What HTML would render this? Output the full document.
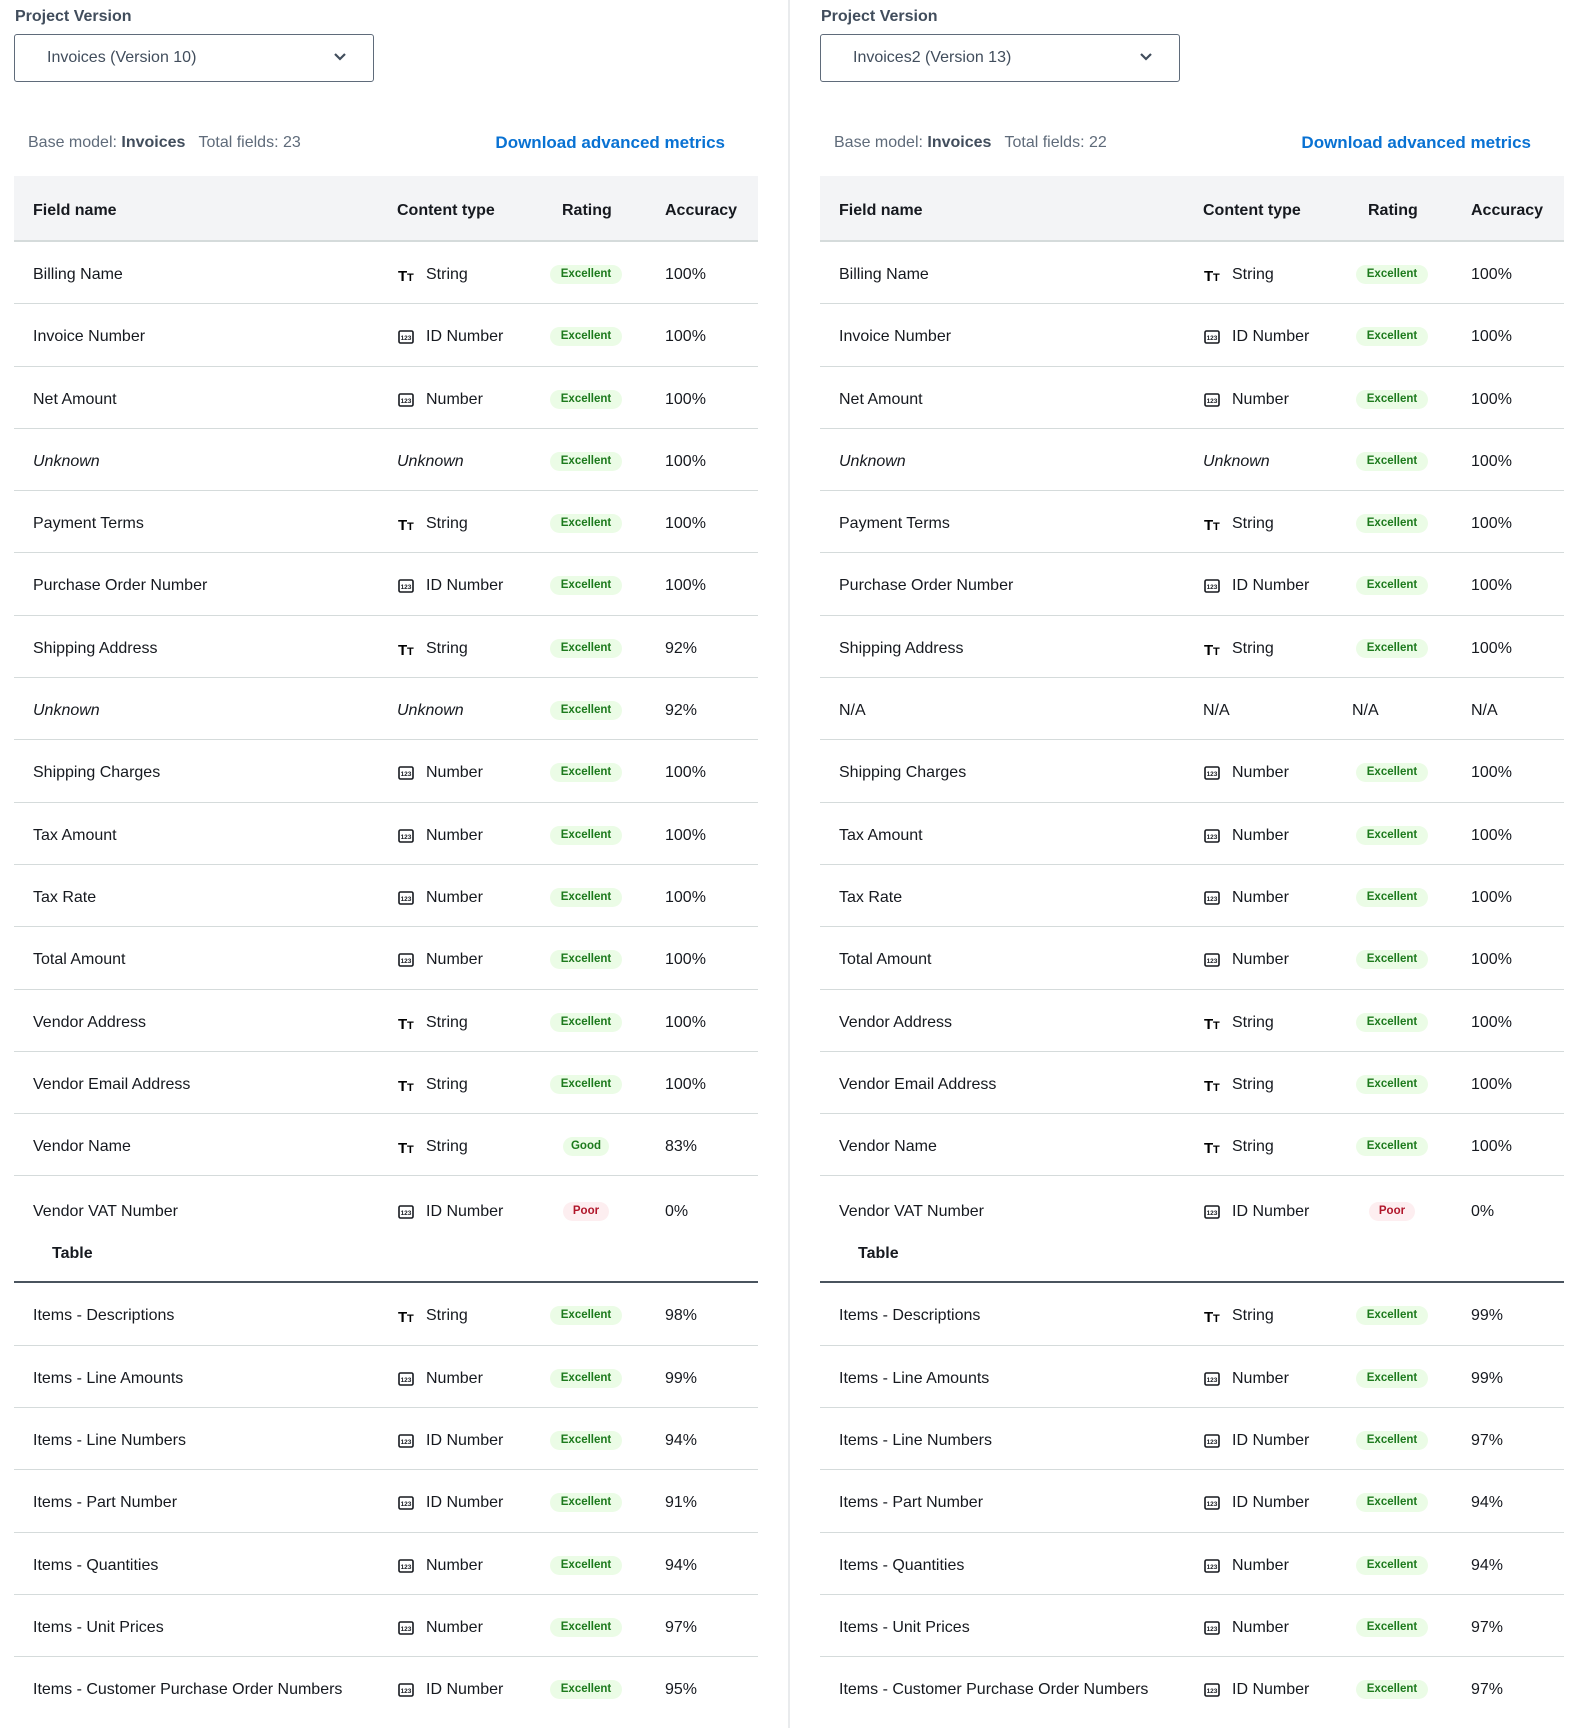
<!DOCTYPE html>
<html><head><meta charset="utf-8"><style>
*{margin:0;padding:0;box-sizing:border-box}
body{width:1583px;height:1728px;background:#fff;font-family:"Liberation Sans",Arial,sans-serif;color:#16191f;position:relative;overflow:hidden}
.panel{position:absolute;top:0;width:744px}
.pv{position:absolute;top:8px;left:1px;font-size:16px;font-weight:bold;color:#414d5c}
.dd{position:absolute;top:34px;left:0;width:360px;height:48px;border:1px solid #5f6b7a;border-radius:3px;font-size:16px;color:#414d5c;padding:14px 0 0 32px}
.dd svg{position:absolute;right:26px;top:17px}
.bm{position:absolute;top:134px;left:14px;font-size:16px;color:#5f6b7a}
.bm b{color:#414d5c}
.dl{position:absolute;top:133px;right:33px;font-size:17px;font-weight:bold;color:#0972d3}
.tbl{position:absolute;top:176px;left:0;width:744px}
.hd{height:66px;background:#f3f4f6;border-bottom:2px solid #d5dbdb;position:relative;font-weight:bold;font-size:16px}
.hd span{position:absolute;top:26px}
.r{height:62.3px;border-bottom:1px solid #d5dbdb;position:relative;font-size:16px}
.r>*{position:absolute;top:24px}
.n{left:19px}
.ic{left:384px;top:26px!important}
.t{left:412px}
.a{left:651px}
.b{left:536px;width:72px;height:19px;top:23px!important;border-radius:10px;font-size:11.5px;font-weight:bold;text-align:center;line-height:19px}
.e{background:#ebfce6;color:#1d7a1d}
.g{background:#ebfce6;color:#1d7a1d;left:549px;width:46px}
.p{background:#fdeef0;color:#b0162a;left:549px;width:46px}
i{font-style:italic}
.big{height:107px;border-bottom:2px solid #4a545e}
.tl{left:38px;top:69px!important;font-weight:bold}
</style></head><body>

<svg width="0" height="0" style="position:absolute"><defs>
<symbol id="num" viewBox="0 0 16 14"><rect x="1" y="1" width="14" height="12" rx="1.5" fill="none" stroke="#16191f" stroke-width="1.6"/><text x="8" y="10" font-size="6.5" font-weight="bold" text-anchor="middle" font-family="Liberation Sans" fill="#16191f">123</text></symbol>
<symbol id="tt" viewBox="0 0 18 14"><text x="0" y="13" font-size="15" font-weight="bold" font-family="Liberation Sans">T</text><text x="9" y="13" font-size="11" font-weight="bold" font-family="Liberation Sans">T</text></symbol>
</defs></svg>

<div style="position:absolute;left:788px;top:0;width:2px;height:1728px;background:#e9ebed"></div>

<!-- LEFT -->
<div class="panel" style="left:14px">
<div class="pv">Project Version</div>
<div class="dd">Invoices (Version 10)<svg width="14" height="10" viewBox="0 0 14 10"><path d="M2 2l5 5 5-5" fill="none" stroke="#414d5c" stroke-width="2.2"/></svg></div>
<div class="bm">Base model: <b>Invoices</b> &nbsp; Total fields: 23</div>
<div class="dl">Download advanced metrics</div>
<div class="tbl">
<div class="hd"><span style="left:19px">Field name</span><span style="left:383px">Content type</span><span style="left:548px">Rating</span><span style="left:651px">Accuracy</span></div>
<div class="r"><span class="n">Billing Name</span><svg class="ic" width="18" height="14"><use href="#tt"/></svg><span class="t">String</span><span class="b e">Excellent</span><span class="a">100%</span></div>
<div class="r"><span class="n">Invoice Number</span><svg class="ic" width="16" height="14"><use href="#num"/></svg><span class="t">ID Number</span><span class="b e">Excellent</span><span class="a">100%</span></div>
<div class="r"><span class="n">Net Amount</span><svg class="ic" width="16" height="14"><use href="#num"/></svg><span class="t">Number</span><span class="b e">Excellent</span><span class="a">100%</span></div>
<div class="r"><i class="n">Unknown</i><i style="left:383px">Unknown</i><span class="b e">Excellent</span><span class="a">100%</span></div>
<div class="r"><span class="n">Payment Terms</span><svg class="ic" width="18" height="14"><use href="#tt"/></svg><span class="t">String</span><span class="b e">Excellent</span><span class="a">100%</span></div>
<div class="r"><span class="n">Purchase Order Number</span><svg class="ic" width="16" height="14"><use href="#num"/></svg><span class="t">ID Number</span><span class="b e">Excellent</span><span class="a">100%</span></div>
<div class="r"><span class="n">Shipping Address</span><svg class="ic" width="18" height="14"><use href="#tt"/></svg><span class="t">String</span><span class="b e">Excellent</span><span class="a">92%</span></div>
<div class="r"><i class="n">Unknown</i><i style="left:383px">Unknown</i><span class="b e">Excellent</span><span class="a">92%</span></div>
<div class="r"><span class="n">Shipping Charges</span><svg class="ic" width="16" height="14"><use href="#num"/></svg><span class="t">Number</span><span class="b e">Excellent</span><span class="a">100%</span></div>
<div class="r"><span class="n">Tax Amount</span><svg class="ic" width="16" height="14"><use href="#num"/></svg><span class="t">Number</span><span class="b e">Excellent</span><span class="a">100%</span></div>
<div class="r"><span class="n">Tax Rate</span><svg class="ic" width="16" height="14"><use href="#num"/></svg><span class="t">Number</span><span class="b e">Excellent</span><span class="a">100%</span></div>
<div class="r"><span class="n">Total Amount</span><svg class="ic" width="16" height="14"><use href="#num"/></svg><span class="t">Number</span><span class="b e">Excellent</span><span class="a">100%</span></div>
<div class="r"><span class="n">Vendor Address</span><svg class="ic" width="18" height="14"><use href="#tt"/></svg><span class="t">String</span><span class="b e">Excellent</span><span class="a">100%</span></div>
<div class="r"><span class="n">Vendor Email Address</span><svg class="ic" width="18" height="14"><use href="#tt"/></svg><span class="t">String</span><span class="b e">Excellent</span><span class="a">100%</span></div>
<div class="r"><span class="n">Vendor Name</span><svg class="ic" width="18" height="14"><use href="#tt"/></svg><span class="t">String</span><span class="b g">Good</span><span class="a">83%</span></div>
<div class="r big"><span class="n" style="top:27px">Vendor VAT Number</span><svg class="ic" style="top:29px!important" width="16" height="14"><use href="#num"/></svg><span class="t" style="top:27px">ID Number</span><span class="b p" style="top:26px!important">Poor</span><span class="a" style="top:27px">0%</span><span class="tl">Table</span></div>
<div class="r"><span class="n">Items - Descriptions</span><svg class="ic" width="18" height="14"><use href="#tt"/></svg><span class="t">String</span><span class="b e">Excellent</span><span class="a">98%</span></div>
<div class="r"><span class="n">Items - Line Amounts</span><svg class="ic" width="16" height="14"><use href="#num"/></svg><span class="t">Number</span><span class="b e">Excellent</span><span class="a">99%</span></div>
<div class="r"><span class="n">Items - Line Numbers</span><svg class="ic" width="16" height="14"><use href="#num"/></svg><span class="t">ID Number</span><span class="b e">Excellent</span><span class="a">94%</span></div>
<div class="r"><span class="n">Items - Part Number</span><svg class="ic" width="16" height="14"><use href="#num"/></svg><span class="t">ID Number</span><span class="b e">Excellent</span><span class="a">91%</span></div>
<div class="r"><span class="n">Items - Quantities</span><svg class="ic" width="16" height="14"><use href="#num"/></svg><span class="t">Number</span><span class="b e">Excellent</span><span class="a">94%</span></div>
<div class="r"><span class="n">Items - Unit Prices</span><svg class="ic" width="16" height="14"><use href="#num"/></svg><span class="t">Number</span><span class="b e">Excellent</span><span class="a">97%</span></div>
<div class="r" style="border:none"><span class="n">Items - Customer Purchase Order Numbers</span><svg class="ic" width="16" height="14"><use href="#num"/></svg><span class="t">ID Number</span><span class="b e">Excellent</span><span class="a">95%</span></div>
</div>
</div>

<!-- RIGHT -->
<div class="panel" style="left:820px">
<div class="pv">Project Version</div>
<div class="dd">Invoices2 (Version 13)<svg width="14" height="10" viewBox="0 0 14 10"><path d="M2 2l5 5 5-5" fill="none" stroke="#414d5c" stroke-width="2.2"/></svg></div>
<div class="bm">Base model: <b>Invoices</b> &nbsp; Total fields: 22</div>
<div class="dl">Download advanced metrics</div>
<div class="tbl">
<div class="hd"><span style="left:19px">Field name</span><span style="left:383px">Content type</span><span style="left:548px">Rating</span><span style="left:651px">Accuracy</span></div>
<div class="r"><span class="n">Billing Name</span><svg class="ic" width="18" height="14"><use href="#tt"/></svg><span class="t">String</span><span class="b e">Excellent</span><span class="a">100%</span></div>
<div class="r"><span class="n">Invoice Number</span><svg class="ic" width="16" height="14"><use href="#num"/></svg><span class="t">ID Number</span><span class="b e">Excellent</span><span class="a">100%</span></div>
<div class="r"><span class="n">Net Amount</span><svg class="ic" width="16" height="14"><use href="#num"/></svg><span class="t">Number</span><span class="b e">Excellent</span><span class="a">100%</span></div>
<div class="r"><i class="n">Unknown</i><i style="left:383px">Unknown</i><span class="b e">Excellent</span><span class="a">100%</span></div>
<div class="r"><span class="n">Payment Terms</span><svg class="ic" width="18" height="14"><use href="#tt"/></svg><span class="t">String</span><span class="b e">Excellent</span><span class="a">100%</span></div>
<div class="r"><span class="n">Purchase Order Number</span><svg class="ic" width="16" height="14"><use href="#num"/></svg><span class="t">ID Number</span><span class="b e">Excellent</span><span class="a">100%</span></div>
<div class="r"><span class="n">Shipping Address</span><svg class="ic" width="18" height="14"><use href="#tt"/></svg><span class="t">String</span><span class="b e">Excellent</span><span class="a">100%</span></div>
<div class="r"><span class="n">N/A</span><span style="left:383px">N/A</span><span style="left:532px">N/A</span><span class="a">N/A</span></div>
<div class="r"><span class="n">Shipping Charges</span><svg class="ic" width="16" height="14"><use href="#num"/></svg><span class="t">Number</span><span class="b e">Excellent</span><span class="a">100%</span></div>
<div class="r"><span class="n">Tax Amount</span><svg class="ic" width="16" height="14"><use href="#num"/></svg><span class="t">Number</span><span class="b e">Excellent</span><span class="a">100%</span></div>
<div class="r"><span class="n">Tax Rate</span><svg class="ic" width="16" height="14"><use href="#num"/></svg><span class="t">Number</span><span class="b e">Excellent</span><span class="a">100%</span></div>
<div class="r"><span class="n">Total Amount</span><svg class="ic" width="16" height="14"><use href="#num"/></svg><span class="t">Number</span><span class="b e">Excellent</span><span class="a">100%</span></div>
<div class="r"><span class="n">Vendor Address</span><svg class="ic" width="18" height="14"><use href="#tt"/></svg><span class="t">String</span><span class="b e">Excellent</span><span class="a">100%</span></div>
<div class="r"><span class="n">Vendor Email Address</span><svg class="ic" width="18" height="14"><use href="#tt"/></svg><span class="t">String</span><span class="b e">Excellent</span><span class="a">100%</span></div>
<div class="r"><span class="n">Vendor Name</span><svg class="ic" width="18" height="14"><use href="#tt"/></svg><span class="t">String</span><span class="b e">Excellent</span><span class="a">100%</span></div>
<div class="r big"><span class="n" style="top:27px">Vendor VAT Number</span><svg class="ic" style="top:29px!important" width="16" height="14"><use href="#num"/></svg><span class="t" style="top:27px">ID Number</span><span class="b p" style="top:26px!important">Poor</span><span class="a" style="top:27px">0%</span><span class="tl">Table</span></div>
<div class="r"><span class="n">Items - Descriptions</span><svg class="ic" width="18" height="14"><use href="#tt"/></svg><span class="t">String</span><span class="b e">Excellent</span><span class="a">99%</span></div>
<div class="r"><span class="n">Items - Line Amounts</span><svg class="ic" width="16" height="14"><use href="#num"/></svg><span class="t">Number</span><span class="b e">Excellent</span><span class="a">99%</span></div>
<div class="r"><span class="n">Items - Line Numbers</span><svg class="ic" width="16" height="14"><use href="#num"/></svg><span class="t">ID Number</span><span class="b e">Excellent</span><span class="a">97%</span></div>
<div class="r"><span class="n">Items - Part Number</span><svg class="ic" width="16" height="14"><use href="#num"/></svg><span class="t">ID Number</span><span class="b e">Excellent</span><span class="a">94%</span></div>
<div class="r"><span class="n">Items - Quantities</span><svg class="ic" width="16" height="14"><use href="#num"/></svg><span class="t">Number</span><span class="b e">Excellent</span><span class="a">94%</span></div>
<div class="r"><span class="n">Items - Unit Prices</span><svg class="ic" width="16" height="14"><use href="#num"/></svg><span class="t">Number</span><span class="b e">Excellent</span><span class="a">97%</span></div>
<div class="r" style="border:none"><span class="n">Items - Customer Purchase Order Numbers</span><svg class="ic" width="16" height="14"><use href="#num"/></svg><span class="t">ID Number</span><span class="b e">Excellent</span><span class="a">97%</span></div>
</div>
</div>
</body></html>
